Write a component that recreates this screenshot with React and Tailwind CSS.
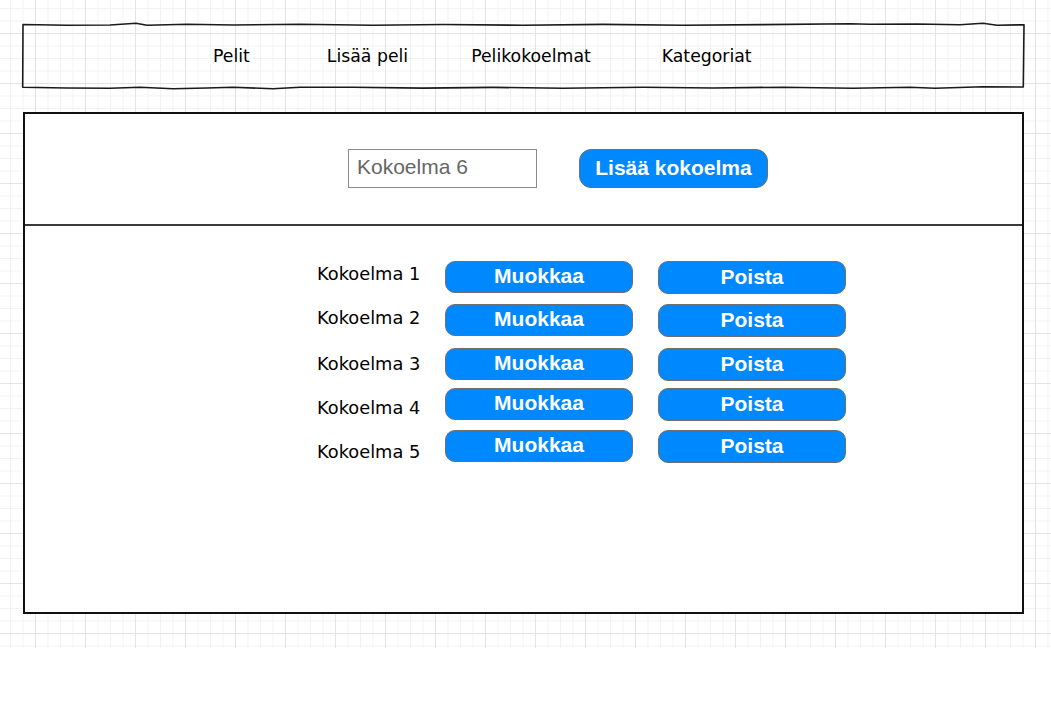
const navItems = [
  { label: 'Pelit', className: 'ml-[190px]' },
  { label: 'Lisää peli', className: 'ml-[77px]' },
  { label: 'Pelikokoelmat', className: 'ml-[63px]' },
  { label: 'Kategoriat', className: 'ml-[71px]' },
];

// row spacing and label offsets are uneven in the mockup, kept as-is
const collections = [
  { name: 'Kokoelma 1', rowClass: 'mt-0', labelClass: 'mt-[3px]' },
  { name: 'Kokoelma 2', rowClass: 'mt-[10px]', labelClass: 'mt-[4px]' },
  { name: 'Kokoelma 3', rowClass: 'mt-[11px]', labelClass: 'mt-[6px]' },
  { name: 'Kokoelma 4', rowClass: 'mt-[7px]', labelClass: 'mt-[10px]' },
  { name: 'Kokoelma 5', rowClass: 'mt-[9px]', labelClass: 'mt-[12px]' },
];

function SketchBorder() {
  return (
    <svg
      className="absolute left-0 top-0 w-full h-full overflow-visible pointer-events-none"
      viewBox="0 0 1001 62"
      preserveAspectRatio="none"
    >
      <path
        d="M0,-0.5 L44,0.3 L87,0 L113,-1.7 L124,0.3 L164,-0.7 L210,0 L277,-0.7 L350,0.2 L420,-0.5 L500,0.3 L580,-0.6 L660,0.2 L740,-0.4 L827,-1.2 L847,-0.7 L894,-1 L937,-0.3 L960,-1.7 L974,0.3 L1001,-0.3 L1000.3,62 L960,61.8 L912,63.3 L887,62.3 L830,63.2 L760,62.2 L690,63 L620,62.3 L540,63.2 L470,62.4 L400,63.1 L330,62.3 L277,62.3 L250,63.7 L210,62.3 L184,63 L150,63.7 L117,62.3 L87,63.3 L44,63 L-0.3,62.3 Z"
        fill="none"
        stroke="#1a1a1a"
        strokeWidth="1.6"
        strokeLinejoin="round"
        vectorEffect="non-scaling-stroke"
      />
    </svg>
  );
}

function BlueButton({ children, className = '' }) {
  return (
    <button
      className={`bg-[#0088ff] text-white font-bold border border-[#6f6f6f] flex items-center justify-center font-['Liberation_Sans',Arial,sans-serif] ${className}`}
    >
      {children}
    </button>
  );
}

export default function App() {
  return (
    <div className="w-[1051px] h-[701px] bg-white">
      <div className="h-[648px] pt-[25px] [background-image:linear-gradient(to_right,#e4e4e4_1px,transparent_1px),linear-gradient(to_bottom,#e4e4e4_1px,transparent_1px),linear-gradient(to_right,#f2f2f2_1px,transparent_1px),linear-gradient(to_bottom,#f2f2f2_1px,transparent_1px)] [background-size:50px_50px,50px_50px,12.5px_12.5px,12.5px_12.5px] [background-position:35px_33px,35px_33px,10px_8px,10px_8px]">
        <nav className="relative ml-[23px] w-[1001px] h-[62px] flex items-center font-['DejaVu_Sans',Verdana,sans-serif] text-[17.3px] text-black">
          <SketchBorder />
          {navItems.map((item) => (
            <span key={item.label} className={`leading-5 whitespace-nowrap ${item.className}`}>
              {item.label}
            </span>
          ))}
        </nav>

        <main className="ml-[23px] mt-[25px] w-[1001px] h-[502px] bg-white border-2 border-[#111]">
          <div className="h-[112px] border-b-2 border-[#3a3a3a] flex items-start pt-[35px] pl-[323px]">
            <input
              type="text"
              readOnly
              value="Kokoelma 6"
              className="w-[189px] h-[39px] border border-[#8a8a8a] bg-white pl-[8px] pb-[3px] text-[21px] text-[#666] font-['Liberation_Sans',Arial,sans-serif] outline-none"
            />
            <BlueButton className="ml-[42px] w-[189px] h-[39px] rounded-[12px] text-[21px] pb-[2px]">
              Lisää kokoelma
            </BlueButton>
          </div>

          <div className="pt-[35px] pl-[292px] flex flex-col">
            {collections.map((c) => (
              <div key={c.name} className={`flex items-start ${c.rowClass}`}>
                <span
                  className={`w-[128px] leading-5 text-[17.8px] text-black font-['DejaVu_Sans',Verdana,sans-serif] ${c.labelClass}`}
                >
                  {c.name}
                </span>
                <BlueButton className="w-[188px] h-[32px] rounded-[10px] text-[21px] pb-[2px]">
                  Muokkaa
                </BlueButton>
                <BlueButton className="ml-[25px] w-[188px] h-[33px] rounded-[10px] text-[21px] pb-[2px]">
                  Poista
                </BlueButton>
              </div>
            ))}
          </div>
        </main>
      </div>
    </div>
  );
}
